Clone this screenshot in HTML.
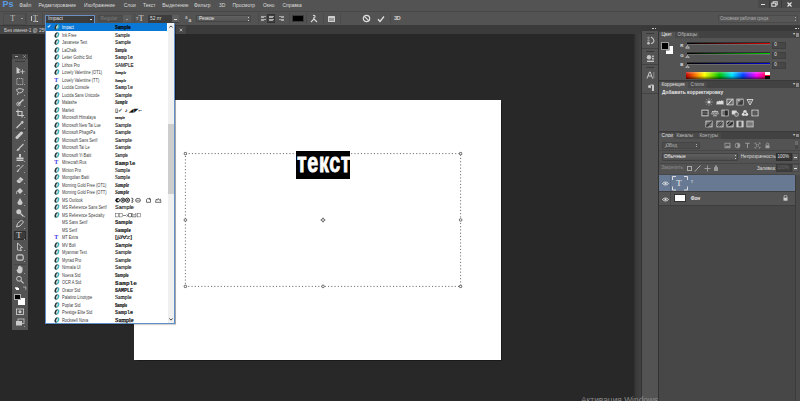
<!DOCTYPE html>
<html><head><meta charset="utf-8">
<style>
*{margin:0;padding:0;box-sizing:border-box}
html,body{width:800px;height:401px;overflow:hidden;background:#282828;font-family:"Liberation Sans",sans-serif;position:relative}
.a{position:absolute}
.t{position:absolute;white-space:nowrap;line-height:1}
#dd{position:absolute;left:44.8px;top:23.2px;width:130.6px;height:301.1px;background:#fff;border:1px solid #5f8fc8;border-top:none;box-shadow:0.5px 1px 1px rgba(0,0,0,0.35)}
.row{position:absolute;left:0;width:121.2px;height:7.5px}
.row.sel{background:#0a78d6;top:0 !important;height:7.8px}
.row.sel .fn,.row.sel .smp,.row.sel .oi,.row.sel .chk{margin-top:0.3px}
.row .fn{position:absolute;left:16.3px;top:0.7px;font-size:4.6px;line-height:7.5px;color:#3a3a3a;white-space:nowrap;transform:scaleX(0.86);transform-origin:0 50%}
.row.sel .fn{color:#fff}
.row .smp{position:absolute;left:69.5px;top:0.6px;line-height:7.5px;color:#111;-webkit-text-stroke:0.12px #111;white-space:nowrap;transform-origin:0 50%}
.oi{position:absolute;left:8.6px;top:1px;width:6px;height:6px}
.ti{position:absolute;left:8.5px;top:1px;font-style:normal;font-weight:bold;font-size:6px;line-height:6px;color:#3535e8;font-family:"Liberation Serif",serif}
.chk{position:absolute;left:1px;top:1px;font-size:5px;line-height:5px;color:#fff;font-weight:normal}
#sb{position:absolute;left:122.2px;top:0;width:5.6px;height:299.8px;background:#f0f0f0}
#thumb{position:absolute;left:0;top:100.5px;width:5.6px;height:70px;background:#cdcdcd}
</style></head><body>
<svg width="0" height="0" style="position:absolute"><defs><symbol id="oic" viewBox="0 0 6 6"><g transform="translate(0.6 0) skewX(-12)"><ellipse cx="3" cy="3" rx="2.3" ry="2.7" fill="#3bb0ba"/><path d="M3 0.3A2.3 2.7 0 0 0 3 5.7Z" fill="#2e2e2e"/><ellipse cx="3" cy="3" rx="0.65" ry="1.8" fill="#fff"/></g></symbol></defs></svg>
<div class="a" style="left:0px;top:0px;width:800px;height:11px;background:#535353;"></div>
<div class="a" style="left:0px;top:10.5px;width:800px;height:1px;background:#484848;"></div>
<span class="t" style="left:2.6px;top:0.2px;font-size:9px;color:#5c9de2;font-weight:bold;letter-spacing:-0.2px">Ps</span>
<span class="t" style="left:19.3px;top:4px;font-size:4.95px;color:#dcdcdc;">Файл</span>
<span class="t" style="left:38.5px;top:4px;font-size:4.95px;color:#dcdcdc;">Редактирование</span>
<span class="t" style="left:84px;top:4px;font-size:4.95px;color:#dcdcdc;">Изображение</span>
<span class="t" style="left:123.8px;top:4px;font-size:4.95px;color:#dcdcdc;">Слои</span>
<span class="t" style="left:143px;top:4px;font-size:4.95px;color:#dcdcdc;">Текст</span>
<span class="t" style="left:162.3px;top:4px;font-size:4.95px;color:#dcdcdc;">Выделение</span>
<span class="t" style="left:194px;top:4px;font-size:4.95px;color:#dcdcdc;">Фильтр</span>
<span class="t" style="left:219px;top:4px;font-size:4.95px;color:#dcdcdc;">3D</span>
<span class="t" style="left:232.5px;top:4px;font-size:4.95px;color:#dcdcdc;">Просмотр</span>
<span class="t" style="left:263px;top:4px;font-size:4.95px;color:#dcdcdc;">Окно</span>
<span class="t" style="left:282.5px;top:4px;font-size:4.95px;color:#dcdcdc;">Справка</span>
<div class="a" style="left:757.5px;top:0px;width:42.5px;height:7.5px;background:#4a4a4a;border-radius:0 0 0 1px"></div>
<div class="a" style="left:768.5px;top:0px;width:1px;height:7.5px;background:#3c3c3c;"></div>
<div class="a" style="left:780.5px;top:0px;width:1px;height:7.5px;background:#3c3c3c;"></div>
<div class="a" style="left:761px;top:4px;width:4px;height:1.2px;background:#e0e0e0;"></div>
<svg class="a" style="left:771px;top:1px" width="7" height="6" viewBox="0 0 7 6"><rect x="2.2" y="0.8" width="4" height="3" fill="none" stroke="#e0e0e0" stroke-width="1"/><rect x="0.8" y="2.2" width="4" height="3" fill="#4a4a4a" stroke="#e0e0e0" stroke-width="1"/></svg>
<svg class="a" style="left:787px;top:1.5px" width="5" height="5" viewBox="0 0 5 5"><path d="M0.5 0.5L4.5 4.5M4.5 0.5L0.5 4.5" stroke="#e8e8e8" stroke-width="1.1"/></svg>
<div class="a" style="left:0px;top:11.5px;width:800px;height:13.5px;background:#535353;"></div>
<div class="a" style="left:0px;top:24.6px;width:800px;height:1px;background:#3b3b3b;"></div>
<span class="t" style="left:10.3px;top:14.6px;font-size:8px;color:#bdbdbd;font-family:'Liberation Serif'">T</span>
<div class="a" style="left:21px;top:18.3px;width:1.6px;height:1.2px;background:#9a9a9a;"></div>
<div class="a" style="left:2.5px;top:12.5px;width:23px;height:12px;background:none;border:0.5px solid #4a4a4a"></div>
<div class="a" style="left:25.5px;top:13px;width:0.8px;height:11px;background:#4a4a4a;"></div>
<span class="t" style="left:33px;top:14.8px;font-size:7.5px;color:#c8c8c8;font-family:'Liberation Serif'">T</span>
<div class="a" style="left:31.2px;top:16px;width:1px;height:5px;background:#c8c8c8;"></div>
<div class="a" style="left:33px;top:21.3px;width:5px;height:0.8px;background:#aaa;"></div>
<div class="a" style="left:36.5px;top:20.5px;width:1.5px;height:1.5px;background:#ddd;"></div>
<div class="a" style="left:42px;top:13px;width:0.8px;height:11px;background:#4a4a4a;"></div>
<div class="a" style="left:45px;top:14.5px;width:49.5px;height:9px;background:#3d3d3d;border:1px solid #6b8fc2;border-bottom:none"></div>
<span class="t" style="left:48px;top:16.2px;font-size:5px;color:#e0e0e0;">Impact</span>
<div class="a" style="left:88px;top:15.5px;width:6px;height:7px;background:#3a3a3a;"></div>
<div class="a" style="left:89.5px;top:18.8px;width:2.5px;height:1.3px;background:#dddddd;"></div>
<div class="a" style="left:98.3px;top:14.9px;width:32.2px;height:7.5px;background:#4e4e4e;border:0.5px solid #4a4a4a"></div>
<span class="t" style="left:100.5px;top:16.5px;font-size:4.8px;color:#7a7a7a;">Regular</span>
<div class="a" style="left:122.5px;top:15.2px;width:8px;height:7px;background:#5c5c5c;"></div>
<div class="a" style="left:125.5px;top:18.8px;width:2px;height:1px;background:#9a9a9a;"></div>
<div class="a" style="left:133.5px;top:13px;width:0.8px;height:11px;background:#4a4a4a;"></div>
<span class="t" style="left:138.5px;top:14px;font-size:8.5px;color:#d0d0d0;font-family:'Liberation Serif'">T</span>
<span class="t" style="left:135.8px;top:16.8px;font-size:4.5px;color:#d0d0d0;font-family:'Liberation Serif'">T</span>
<div class="a" style="left:147.8px;top:14.7px;width:31.5px;height:8px;background:#3d3d3d;"></div>
<span class="t" style="left:150px;top:16.6px;font-size:4.8px;color:#e0e0e0;">52 пт</span>
<div class="a" style="left:171.5px;top:15.2px;width:7.5px;height:7px;background:#5e5e5e;"></div>
<div class="a" style="left:174px;top:18.8px;width:2.5px;height:1.2px;background:#dcdcdc;"></div>
<span class="t" style="left:185px;top:15.5px;font-size:4.5px;color:#cfcfcf;">a</span>
<span class="t" style="left:188.5px;top:17.5px;font-size:5px;color:#cfcfcf;font-weight:bold">a</span>
<div class="a" style="left:196px;top:14.8px;width:55px;height:7.4px;background:linear-gradient(#616161,#545454);border:0.5px solid #444;border-radius:1px"></div>
<span class="t" style="left:199px;top:16.6px;font-size:4.8px;color:#e6e6e6;">Резкое</span>
<div class="a" style="left:247.5px;top:16.5px;width:1.2px;height:1.2px;background:#ccc;"></div>
<div class="a" style="left:247.5px;top:19.5px;width:1.2px;height:1.2px;background:#ccc;"></div>
<div class="a" style="left:257.5px;top:13px;width:0.8px;height:11px;background:#4a4a4a;"></div>
<div class="a" style="left:266.5px;top:14px;width:8.5px;height:9px;background:#3f3f3f;border:0.5px solid #333"></div>
<div class="a" style="left:260.5px;top:15.8px;width:5px;height:0.75px;background:#a6a6a6;"></div>
<div class="a" style="left:260.5px;top:17.3px;width:3.5px;height:0.75px;background:#a6a6a6;"></div>
<div class="a" style="left:260.5px;top:18.8px;width:5px;height:0.75px;background:#a6a6a6;"></div>
<div class="a" style="left:260.5px;top:20.3px;width:3.5px;height:0.75px;background:#a6a6a6;"></div>
<div class="a" style="left:268.5px;top:15.8px;width:5px;height:0.75px;background:#a6a6a6;"></div>
<div class="a" style="left:269.25px;top:17.3px;width:3.5px;height:0.75px;background:#a6a6a6;"></div>
<div class="a" style="left:268.5px;top:18.8px;width:5px;height:0.75px;background:#a6a6a6;"></div>
<div class="a" style="left:269.25px;top:20.3px;width:3.5px;height:0.75px;background:#a6a6a6;"></div>
<div class="a" style="left:279.0px;top:15.8px;width:5px;height:0.75px;background:#a6a6a6;"></div>
<div class="a" style="left:280.5px;top:17.3px;width:3.5px;height:0.75px;background:#a6a6a6;"></div>
<div class="a" style="left:279.0px;top:18.8px;width:5px;height:0.75px;background:#a6a6a6;"></div>
<div class="a" style="left:280.5px;top:20.3px;width:3.5px;height:0.75px;background:#a6a6a6;"></div>
<div class="a" style="left:288.5px;top:13px;width:0.8px;height:11px;background:#4a4a4a;"></div>
<div class="a" style="left:292px;top:14.8px;width:11.5px;height:7.5px;background:#000;border:0.5px solid #3a3a3a"></div>
<div class="a" style="left:306px;top:13px;width:0.8px;height:11px;background:#4a4a4a;"></div>
<svg class="a" style="left:310px;top:14px" width="8" height="9" viewBox="0 0 8 9"><path d="M3 1.5 Q5.5 1 5 3 Q3 3.5 4 5 L1 8 M4 5 L7 8" stroke="#d8d8d8" stroke-width="1.1" fill="none"/></svg>
<div class="a" style="left:323px;top:13px;width:0.8px;height:11px;background:#4a4a4a;"></div>
<div class="a" style="left:327.5px;top:16px;width:7.5px;height:6px;background:#cfcfcf;border-radius:0.5px"></div>
<div class="a" style="left:328.5px;top:17.5px;width:5.5px;height:3.5px;background:#9a9a9a;"></div>
<div class="a" style="left:340px;top:13px;width:0.8px;height:11px;background:#4a4a4a;"></div>
<svg class="a" style="left:362px;top:14px" width="9" height="9" viewBox="0 0 9 9"><circle cx="4.5" cy="4.5" r="3.2" stroke="#dcdcdc" stroke-width="1.2" fill="none"/><path d="M2.3 2.3L6.7 6.7" stroke="#dcdcdc" stroke-width="1.2"/></svg>
<svg class="a" style="left:377px;top:14.5px" width="8" height="8" viewBox="0 0 8 8"><path d="M1 4.2L3 6.5L7 1.5" stroke="#e0e0e0" stroke-width="1.3" fill="none"/></svg>
<div class="a" style="left:389.5px;top:13px;width:0.8px;height:11px;background:#4a4a4a;"></div>
<span class="t" style="left:394px;top:15.5px;font-size:5.8px;color:#cfcfcf;font-weight:bold;letter-spacing:-0.8px">3D</span>
<div class="a" style="left:717.5px;top:15.2px;width:80px;height:8px;background:#575757;border:0.5px solid #4a4a4a;border-radius:1px"></div>
<span class="t" style="left:720.3px;top:17px;font-size:4.8px;color:#acacac;transform:scaleX(0.86);transform-origin:0 0">Основная рабочая среда</span>
<div class="a" style="left:795px;top:17px;width:1px;height:1px;background:#aaa;"></div>
<div class="a" style="left:795px;top:20px;width:1px;height:1px;background:#aaa;"></div>
<div class="a" style="left:0px;top:25.5px;width:800px;height:8.5px;background:#3b3b3b;"></div>
<div class="a" style="left:0px;top:25.5px;width:186px;height:8.5px;background:#474747;"></div>
<span class="t" style="left:4px;top:29px;font-size:4.8px;color:#cfcfcf;">Без имени-1 @ 25% (текст, RGB/8) *</span>
<svg class="a" style="left:178.5px;top:28px" width="4" height="4" viewBox="0 0 4 4"><path d="M0.7 0.7L3.3 3.3M3.3 0.7L0.7 3.3" stroke="#c8c8c8" stroke-width="0.8"/></svg>
<div class="a" style="left:633.5px;top:34px;width:7.5px;height:367px;background:linear-gradient(90deg,#2e2e2e,#3a3a3a 30%,#424242);"></div>
<div class="a" style="left:134px;top:100.3px;width:367px;height:259.6px;background:#ffffff;box-shadow:0.8px 0.8px 0.8px #1a1a1a"></div>
<svg class="a" style="left:180px;top:149px" width="286" height="143" viewBox="0 0 286 143"><rect x="5.4" y="4.6" width="275.20000000000005" height="132.8" fill="none" stroke="#6a6a6a" stroke-width="1" stroke-dasharray="1.1 2.15"/><rect x="4.2" y="3.3999999999999995" width="2.4" height="2.4" rx="0.8" fill="#fff" stroke="#444" stroke-width="0.8"/><rect x="4.2" y="69.8" width="2.4" height="2.4" rx="0.8" fill="#fff" stroke="#444" stroke-width="0.8"/><rect x="4.2" y="136.20000000000002" width="2.4" height="2.4" rx="0.8" fill="#fff" stroke="#444" stroke-width="0.8"/><rect x="141.8" y="3.3999999999999995" width="2.4" height="2.4" rx="0.8" fill="#fff" stroke="#444" stroke-width="0.8"/><rect x="141.8" y="136.20000000000002" width="2.4" height="2.4" rx="0.8" fill="#fff" stroke="#444" stroke-width="0.8"/><rect x="279.40000000000003" y="3.3999999999999995" width="2.4" height="2.4" rx="0.8" fill="#fff" stroke="#444" stroke-width="0.8"/><rect x="279.40000000000003" y="69.8" width="2.4" height="2.4" rx="0.8" fill="#fff" stroke="#444" stroke-width="0.8"/><rect x="279.40000000000003" y="136.20000000000002" width="2.4" height="2.4" rx="0.8" fill="#fff" stroke="#444" stroke-width="0.8"/><path d="M143.0 68.8L143.7 70.3L145.2 71.0L143.7 71.7L143.0 73.2L142.3 71.7L140.8 71.0L142.3 70.3Z" fill="none" stroke="#444" stroke-width="0.8"/></svg>
<div class="a" style="left:296px;top:151.2px;width:54px;height:27.7px;background:#000;"></div>
<span class="t" style="left:297.2px;top:148.3px;font-size:28.5px;color:#fff;font-weight:bold;transform:scaleX(0.69);transform-origin:0 0;letter-spacing:1px;-webkit-text-stroke:0.9px #fff">текст</span>
<div class="a" style="left:11.5px;top:53.5px;width:16.5px;height:276px;background:#535353;border-radius:1px 1px 0 0"></div>
<div class="a" style="left:11.5px;top:53.5px;width:16.5px;height:5px;background:#434343;"></div>
<div class="a" style="left:15px;top:55.6px;width:3px;height:0.9px;background:#aaa;"></div>
<svg class="a" style="left:22.5px;top:54.8px" width="3" height="3" viewBox="0 0 3 3"><path d="M0.3 0.3L2.7 2.7M2.7 0.3L0.3 2.7" stroke="#aaa" stroke-width="0.7"/></svg>
<div class="a" style="left:15px;top:60.5px;width:9.5px;height:0.8px;background:#3b3b3b;"></div>
<div class="a" style="left:13.5px;top:130px;width:12.5px;height:0.7px;background:#464646;"></div>
<div class="a" style="left:13.5px;top:218.5px;width:12.5px;height:0.7px;background:#464646;"></div>
<div class="a" style="left:13.5px;top:263.5px;width:12.5px;height:0.7px;background:#464646;"></div>
<div class="a" style="left:13.5px;top:230.5px;width:12.5px;height:9.5px;background:#3b3b3b;border:0.5px solid #2e2e2e"></div>
<svg class="a" style="left:14.5px;top:65.7px" width="10" height="9" viewBox="0 0 10 9"><path d="M1.5 1L6 4.2L3.8 4.6L5 7L1.5 7.5Z" fill="#cacaca"/><path d="M7.5 3.5V8M5.3 5.7H9.7" stroke="#cacaca" stroke-width="0.8"/></svg>
<svg class="a" style="left:14.5px;top:76.5px" width="10" height="9" viewBox="0 0 10 9"><rect x="1.8" y="1.5" width="6" height="6" fill="none" stroke="#cacaca" stroke-width="0.8" stroke-dasharray="1.2 0.8"/></svg>
<div class="a" style="left:24.3px;top:84.3px;width:1px;height:1px;background:#9a9a9a;"></div>
<svg class="a" style="left:14.5px;top:87.0px" width="10" height="9" viewBox="0 0 10 9"><path d="M1.5 2.5Q5 0.5 8.5 2.5Q8 6 4.5 6Q2 5.5 1.5 2.5Z M3 6L2.5 8" fill="none" stroke="#cacaca" stroke-width="0.9"/></svg>
<div class="a" style="left:24.3px;top:95px;width:1px;height:1px;background:#9a9a9a;"></div>
<svg class="a" style="left:14.5px;top:98.3px" width="10" height="9" viewBox="0 0 10 9"><circle cx="3.5" cy="6" r="1.8" fill="none" stroke="#cacaca" stroke-width="0.8"/><path d="M3 6.5L8.5 1.5" stroke="#cacaca" stroke-width="1.4"/></svg>
<div class="a" style="left:24.3px;top:106px;width:1px;height:1px;background:#9a9a9a;"></div>
<svg class="a" style="left:14.5px;top:109.0px" width="10" height="9" viewBox="0 0 10 9"><path d="M3 0.5V6.5H9M1 2.5H7V8.5" fill="none" stroke="#cacaca" stroke-width="1.1"/></svg>
<div class="a" style="left:24.3px;top:117px;width:1px;height:1px;background:#9a9a9a;"></div>
<svg class="a" style="left:14.5px;top:120.0px" width="10" height="9" viewBox="0 0 10 9"><path d="M1.5 8L6.5 3" stroke="#cacaca" stroke-width="1.2"/><path d="M5.5 2L7.5 0.8L8.8 2L7.5 4Z" fill="#cacaca"/></svg>
<div class="a" style="left:24.3px;top:128px;width:1px;height:1px;background:#9a9a9a;"></div>
<svg class="a" style="left:14.5px;top:131.3px" width="10" height="9" viewBox="0 0 10 9"><path d="M2 6.5L6.5 2" stroke="#cacaca" stroke-width="3" stroke-linecap="round"/></svg>
<div class="a" style="left:24.3px;top:139.5px;width:1px;height:1px;background:#9a9a9a;"></div>
<svg class="a" style="left:14.5px;top:142.5px" width="10" height="9" viewBox="0 0 10 9"><path d="M8.5 1L4 5.5" stroke="#cacaca" stroke-width="1.1"/><path d="M4.2 5.2Q2 5 1.5 8Q4.5 8 4.8 6Z" fill="#cacaca"/></svg>
<div class="a" style="left:24.3px;top:150.5px;width:1px;height:1px;background:#9a9a9a;"></div>
<svg class="a" style="left:14.5px;top:153.0px" width="10" height="9" viewBox="0 0 10 9"><rect x="4" y="1" width="2" height="3.5" fill="#cacaca"/><rect x="1.5" y="4.5" width="7" height="2" fill="#cacaca"/><rect x="1.5" y="7" width="7" height="1" fill="#cacaca"/></svg>
<div class="a" style="left:24.3px;top:161px;width:1px;height:1px;background:#9a9a9a;"></div>
<svg class="a" style="left:14.5px;top:164.0px" width="10" height="9" viewBox="0 0 10 9"><path d="M8.5 1L3.5 6M1.5 2.5Q3 0.5 5 2" stroke="#cacaca" stroke-width="1" fill="none"/><path d="M3.8 5.8Q2 6 1.5 8Q3.5 8 4.2 6.5Z" fill="#cacaca"/></svg>
<div class="a" style="left:24.3px;top:172px;width:1px;height:1px;background:#9a9a9a;"></div>
<svg class="a" style="left:14.5px;top:175.0px" width="10" height="9" viewBox="0 0 10 9"><path d="M1.5 6L5.5 2L8.5 4.5L5 8H3Z" fill="#cacaca"/><path d="M3.5 4L6 6.5" stroke="#666" stroke-width="0.6"/></svg>
<div class="a" style="left:24.3px;top:183px;width:1px;height:1px;background:#9a9a9a;"></div>
<svg class="a" style="left:14.5px;top:186.0px" width="10" height="9" viewBox="0 0 10 9"><path d="M2 5L5 2L8 5L5 8Z" fill="#cacaca"/><path d="M2 5Q1 7 1.8 8" stroke="#cacaca" stroke-width="0.8" fill="none"/></svg>
<div class="a" style="left:24.3px;top:194px;width:1px;height:1px;background:#9a9a9a;"></div>
<svg class="a" style="left:14.5px;top:196.5px" width="10" height="9" viewBox="0 0 10 9"><path d="M5 1L7.5 5.5A2.5 2.5 0 0 1 2.5 5.5Z" fill="#cacaca"/></svg>
<div class="a" style="left:24.3px;top:204.5px;width:1px;height:1px;background:#9a9a9a;"></div>
<svg class="a" style="left:14.5px;top:208.0px" width="10" height="9" viewBox="0 0 10 9"><circle cx="3.8" cy="3.8" r="2.5" fill="#cacaca"/><path d="M5.5 5.5L8.5 8.5" stroke="#cacaca" stroke-width="1.3"/></svg>
<div class="a" style="left:24.3px;top:216px;width:1px;height:1px;background:#9a9a9a;"></div>
<svg class="a" style="left:14.5px;top:219.25px" width="10" height="9" viewBox="0 0 10 9"><path d="M1.5 8L2.5 4.5L6.5 1L8.5 3L5 7Z" fill="none" stroke="#cacaca" stroke-width="1"/></svg>
<div class="a" style="left:24.3px;top:227.5px;width:1px;height:1px;background:#9a9a9a;"></div>
<span class="t" style="left:16.2px;top:231.3px;font-size:8.5px;color:#d8d8d8;font-family:'Liberation Serif'">T</span>
<div class="a" style="left:24.3px;top:238.5px;width:1px;height:1px;background:#9a9a9a;"></div>
<svg class="a" style="left:14.5px;top:241.5px" width="10" height="9" viewBox="0 0 10 9"><path d="M2.5 1L7.5 5.5L5 5.8L6.5 8.5L2.5 8Z" fill="none" stroke="#cacaca" stroke-width="0.9"/></svg>
<div class="a" style="left:24.3px;top:249.5px;width:1px;height:1px;background:#9a9a9a;"></div>
<svg class="a" style="left:14.5px;top:252.5px" width="10" height="9" viewBox="0 0 10 9"><rect x="1.8" y="1.8" width="6.4" height="5.4" rx="1.6" fill="none" stroke="#cacaca" stroke-width="1.2"/></svg>
<div class="a" style="left:24.3px;top:260.5px;width:1px;height:1px;background:#9a9a9a;"></div>
<svg class="a" style="left:14.5px;top:265.0px" width="10" height="9" viewBox="0 0 10 9"><path d="M1.5 5L3 4V1.5H4V4V0.8H5.2V4V1.2H6.3V4.5V2.2H7.5V6Q7 8.5 4.5 8.5Q2.5 8.5 1.5 5Z" fill="#cacaca"/></svg>
<div class="a" style="left:24.3px;top:273px;width:1px;height:1px;background:#9a9a9a;"></div>
<svg class="a" style="left:14.5px;top:275.0px" width="10" height="9" viewBox="0 0 10 9"><circle cx="4" cy="3.8" r="2.4" fill="none" stroke="#cacaca" stroke-width="1"/><path d="M5.8 5.6L8.6 8.4" stroke="#cacaca" stroke-width="1.2"/></svg>
<div class="a" style="left:15px;top:286.5px;width:2.5px;height:2.5px;background:#000;border:0.5px solid #ccc"></div>
<div class="a" style="left:16.2px;top:287.8px;width:2.5px;height:2.5px;background:#fff;"></div>
<svg class="a" style="left:21.5px;top:286px" width="5" height="5" viewBox="0 0 5 5"><path d="M1 1H3.8V3.8" fill="none" stroke="#ccc" stroke-width="0.7"/></svg>
<div class="a" style="left:17.6px;top:297.6px;width:7.9px;height:7.4px;background:#fff;"></div>
<div class="a" style="left:14.1px;top:293.6px;width:6.9px;height:6.9px;background:#000;border:0.6px solid #aaa"></div>
<svg class="a" style="left:14.5px;top:307.0px" width="10" height="9" viewBox="0 0 10 9"><rect x="1.5" y="2" width="7" height="5.5" fill="none" stroke="#cacaca" stroke-width="0.9"/><circle cx="5" cy="4.75" r="1.6" fill="#cacaca"/></svg>
<svg class="a" style="left:14.5px;top:317.9px" width="10" height="9" viewBox="0 0 10 9"><rect x="3" y="1" width="6" height="4.5" fill="none" stroke="#cacaca" stroke-width="0.8"/><rect x="1" y="3" width="6" height="4.5" fill="#cacaca"/></svg>
<div class="a" style="left:24.3px;top:326px;width:1px;height:1px;background:#9a9a9a;"></div>
<div class="a" style="left:641px;top:25.5px;width:159px;height:375.5px;background:#313131;"></div>
<div class="a" style="left:641px;top:25.5px;width:159px;height:5.5px;background:#393939;"></div>
<div class="a" style="left:652.3px;top:27.6px;width:1.5px;height:1.5px;background:#c8c8c8;"></div>
<div class="a" style="left:654.5px;top:27.6px;width:1.5px;height:1.5px;background:#c8c8c8;"></div>
<div class="a" style="left:795.3px;top:27.6px;width:1.5px;height:1.5px;background:#c8c8c8;"></div>
<div class="a" style="left:797.5px;top:27.6px;width:1.5px;height:1.5px;background:#c8c8c8;"></div>
<div class="a" style="left:642px;top:31px;width:15.5px;height:370px;background:#535353;"></div>
<div class="a" style="left:642px;top:31px;width:15.5px;height:17.5px;background:#535353;"></div>
<div class="a" style="left:642px;top:48.0px;width:15.5px;height:0.8px;background:#434343;"></div>
<div class="a" style="left:645.5px;top:33px;width:8.5px;height:0.9px;background:#383838;"></div>
<div class="a" style="left:642px;top:49px;width:15.5px;height:15.5px;background:#535353;"></div>
<div class="a" style="left:642px;top:64.0px;width:15.5px;height:0.8px;background:#434343;"></div>
<div class="a" style="left:645.5px;top:51px;width:8.5px;height:0.9px;background:#383838;"></div>
<div class="a" style="left:642px;top:65px;width:15.5px;height:28.5px;background:#535353;"></div>
<div class="a" style="left:642px;top:93.0px;width:15.5px;height:0.8px;background:#434343;"></div>
<div class="a" style="left:645.5px;top:67px;width:8.5px;height:0.9px;background:#383838;"></div>
<svg class="a" style="left:646px;top:36px" width="9" height="9" viewBox="0 0 9 9"><circle cx="2.5" cy="1.8" r="1.2" fill="#8a8a8a"/><circle cx="2.5" cy="4.5" r="1.2" fill="#8a8a8a"/><circle cx="2.5" cy="7.3" r="1.3" fill="#c6c6c6"/><path d="M5 1Q8.5 3 7.8 5.5Q7 7.5 5 7.5" stroke="#c6c6c6" stroke-width="1.1" fill="none"/></svg>
<svg class="a" style="left:646px;top:53.5px" width="9" height="9" viewBox="0 0 9 9"><circle cx="3" cy="3.2" r="2.2" fill="#c6c6c6"/><rect x="6" y="1.6" width="1.8" height="1.6" fill="#c6c6c6"/><rect x="6" y="4" width="1.8" height="1.6" fill="#c6c6c6"/><rect x="1" y="6.6" width="7" height="1.4" fill="#c6c6c6"/></svg>
<svg class="a" style="left:646px;top:71px" width="9" height="8" viewBox="0 0 9 8"><path d="M1 7.5L3.5 1H4.3L6.5 7.5M2 5H5.5" stroke="#c6c6c6" stroke-width="1" fill="none"/><path d="M7.8 1V7.5" stroke="#9a9a9a" stroke-width="0.8"/></svg>
<svg class="a" style="left:646px;top:83.5px" width="9" height="8" viewBox="0 0 9 8"><path d="M4.5 1H7.5V7M6.5 1V7" stroke="#c6c6c6" stroke-width="1" fill="none"/><path d="M4.5 1A2 2 0 0 0 4.5 4.5Z" fill="#c6c6c6"/><rect x="2" y="1" width="3" height="3" rx="1.5" fill="#c6c6c6"/></svg>
<div class="a" style="left:659px;top:31px;width:141px;height:370px;background:#535353;"></div>
<div class="a" style="left:659px;top:31px;width:141px;height:6.5px;background:#424242;"></div>
<div class="a" style="left:659px;top:32px;width:15.5px;height:6.5px;background:#535353;"></div>
<span class="t" style="left:661.5px;top:33.3px;font-size:4.7px;color:#e4e4e4;">Цвет</span>
<div class="a" style="left:675px;top:32px;width:23.799999999999955px;height:5.5px;background:#494949;"></div>
<span class="t" style="left:677.5px;top:33.3px;font-size:4.7px;color:#bdbdbd;">Образцы</span>
<span class="t" style="left:793.2px;top:32.3px;font-size:4px;color:#cfcfcf;">▾</span>
<div class="a" style="left:796px;top:33px;width:3px;height:3.5px;background:#8a8a8a;"></div>
<div class="a" style="left:665.6px;top:46.4px;width:7.4px;height:7.7px;background:#fff;"></div>
<div class="a" style="left:661.2px;top:42.2px;width:7.8px;height:7.4px;background:#000;border:0.6px solid #999;box-shadow:0 0 0 0.5px #555"></div>
<span class="t" style="left:680.3px;top:43.6px;font-size:4.3px;color:#e0e0e0;font-weight:bold">R</span>
<div class="a" style="left:687px;top:42.199999999999996px;width:83px;height:2.6px;background:linear-gradient(90deg,#000 2%,#e00000);border-top:0.6px solid #303030;border-bottom:0.5px solid #6a6a6a"></div>
<svg class="a" style="left:685px;top:45.0px" width="5" height="3.5" viewBox="0 0 5 3.5"><path d="M2.5 0.5L4.5 3.2H0.5Z" fill="#777" stroke="#e0e0e0" stroke-width="0.6"/></svg>
<div class="a" style="left:772px;top:41.7px;width:14px;height:7.2px;background:#474747;border:0.5px solid #3f3f3f"></div>
<span class="t" style="left:774.2px;top:43.4px;font-size:4.6px;color:#e0e0e0;">0</span>
<span class="t" style="left:680.3px;top:53.5px;font-size:4.3px;color:#e0e0e0;font-weight:bold">G</span>
<div class="a" style="left:687px;top:52.099999999999994px;width:83px;height:2.6px;background:linear-gradient(90deg,#000 2%,#00d000);border-top:0.6px solid #303030;border-bottom:0.5px solid #6a6a6a"></div>
<svg class="a" style="left:685px;top:54.9px" width="5" height="3.5" viewBox="0 0 5 3.5"><path d="M2.5 0.5L4.5 3.2H0.5Z" fill="#777" stroke="#e0e0e0" stroke-width="0.6"/></svg>
<div class="a" style="left:772px;top:51.650000000000006px;width:14px;height:7.2px;background:#474747;border:0.5px solid #3f3f3f"></div>
<span class="t" style="left:774.2px;top:53.349999999999994px;font-size:4.6px;color:#e0e0e0;">0</span>
<span class="t" style="left:680.3px;top:63.400000000000006px;font-size:4.3px;color:#e0e0e0;font-weight:bold">B</span>
<div class="a" style="left:687px;top:62.0px;width:83px;height:2.6px;background:linear-gradient(90deg,#000 2%,#0000e0);border-top:0.6px solid #303030;border-bottom:0.5px solid #6a6a6a"></div>
<svg class="a" style="left:685px;top:64.8px" width="5" height="3.5" viewBox="0 0 5 3.5"><path d="M2.5 0.5L4.5 3.2H0.5Z" fill="#777" stroke="#e0e0e0" stroke-width="0.6"/></svg>
<div class="a" style="left:772px;top:61.6px;width:14px;height:7.2px;background:#474747;border:0.5px solid #3f3f3f"></div>
<span class="t" style="left:774.2px;top:63.3px;font-size:4.6px;color:#e0e0e0;">0</span>
<div class="a" style="left:686px;top:72.2px;width:83.5px;height:6.6px;background:linear-gradient(90deg,#c00000 0%,#ff8000 12%,#ffff00 22%,#00c000 40%,#00e0ff 55%,#0040ff 68%,#ff00ff 84%,#ff0000 100%);"></div>
<div class="a" style="left:686px;top:72.2px;width:83.5px;height:6.6px;background:linear-gradient(rgba(255,255,255,0.3),rgba(255,255,255,0) 40%,rgba(0,0,0,0) 55%,rgba(0,0,0,0.6));"></div>
<div class="a" style="left:765px;top:72.2px;width:4.5px;height:3.3px;background:#fff;"></div>
<div class="a" style="left:765px;top:75.5px;width:4.5px;height:3.3px;background:#000;"></div>
<div class="a" style="left:659px;top:80px;width:141px;height:1px;background:#3a3a3a;"></div>
<div class="a" style="left:659px;top:81px;width:141px;height:6.700000000000003px;background:#424242;"></div>
<div class="a" style="left:659px;top:82px;width:28.5px;height:6.700000000000003px;background:#535353;"></div>
<span class="t" style="left:661.5px;top:83.3px;font-size:4.7px;color:#e4e4e4;">Коррекция</span>
<div class="a" style="left:688px;top:82px;width:18.5px;height:5.700000000000003px;background:#494949;"></div>
<span class="t" style="left:690.5px;top:83.3px;font-size:4.7px;color:#bdbdbd;">Стили</span>
<span class="t" style="left:793.2px;top:82.3px;font-size:4px;color:#cfcfcf;">▾</span>
<div class="a" style="left:796px;top:83px;width:3px;height:3.5px;background:#8a8a8a;"></div>
<span class="t" style="left:662px;top:91.2px;font-size:4.9px;color:#e6e6e6;font-weight:bold">Добавить корректировку</span>
<svg class="a" style="left:705px;top:98px" width="8" height="8" viewBox="0 0 8 8"><circle cx="4" cy="4" r="1.6" fill="#dadada"/><path d="M4 0.3V1.6M4 6.4V7.7M0.3 4H1.6M6.4 4H7.7M1.4 1.4L2.3 2.3M5.7 5.7L6.6 6.6M1.4 6.6L2.3 5.7M5.7 2.3L6.6 1.4" stroke="#dadada" stroke-width="0.6"/></svg>
<svg class="a" style="left:715.8px;top:98px" width="8" height="8" viewBox="0 0 8 8"><path d="M0.5 6.5V4L1.5 3L2.5 3.5L3.5 2.5L4.5 3.2L5.5 2.2L6.5 3L7.5 2.5V6.5Z" fill="#dadada"/><rect x="0.5" y="6" width="7" height="1" fill="#888"/></svg>
<svg class="a" style="left:726px;top:98px" width="8" height="8" viewBox="0 0 8 8"><rect x="0.9" y="1.1" width="6.2" height="5.8" fill="#6a6a6a" stroke="#dadada" stroke-width="0.8"/><path d="M1.2 6.5Q3 6 4 4Q5 2 6.8 1.5" stroke="#eee" stroke-width="0.9" fill="none"/></svg>
<svg class="a" style="left:736px;top:98px" width="8" height="8" viewBox="0 0 8 8"><rect x="0.9" y="1.1" width="6.2" height="5.8" fill="#6a6a6a" stroke="#dadada" stroke-width="0.8"/><path d="M1.2 6.7L6.8 1.3L6.8 6.7Z" fill="#3a3a3a"/><path d="M2 2.5H3.6M2.8 1.7V3.3" stroke="#fff" stroke-width="0.5"/></svg>
<svg class="a" style="left:746px;top:98px" width="8" height="8" viewBox="0 0 8 8"><path d="M1 1.5H7L4 7Z" fill="none" stroke="#dadada" stroke-width="0.9"/><path d="M2.5 2.5H5.5L4 5.5Z" fill="#9a9a9a"/></svg>
<svg class="a" style="left:700.5px;top:109.2px" width="8" height="8" viewBox="0 0 8 8"><rect x="0.9" y="1.1" width="6.2" height="5.8" fill="#6a6a6a" stroke="#dadada" stroke-width="0.8"/><path d="M1.5 2.5H6.5M1.5 4H6.5M1.5 5.5H6.5" stroke="#333" stroke-width="0.7"/></svg>
<svg class="a" style="left:710.5px;top:109.2px" width="8" height="8" viewBox="0 0 8 8"><path d="M4 1V6.5M1 2.5H7M2 6.8H6" stroke="#dadada" stroke-width="0.7"/><path d="M0.5 5L1.7 2.5L2.9 5Z M5.1 5L6.3 2.5L7.5 5Z" fill="none" stroke="#dadada" stroke-width="0.6"/></svg>
<svg class="a" style="left:720.5px;top:109.2px" width="8" height="8" viewBox="0 0 8 8"><rect x="0.9" y="1.1" width="6.2" height="5.8" fill="#6a6a6a" stroke="#dadada" stroke-width="0.8"/><rect x="4" y="1.5" width="2.8" height="5" fill="#2a2a2a"/></svg>
<svg class="a" style="left:730.5px;top:109.2px" width="8" height="8" viewBox="0 0 8 8"><rect x="0.8" y="1.5" width="5" height="4" rx="0.6" fill="#dadada"/><circle cx="5.5" cy="5.3" r="2" fill="#6a6a6a" stroke="#dadada" stroke-width="0.7"/></svg>
<svg class="a" style="left:740.5px;top:109.2px" width="8" height="8" viewBox="0 0 8 8"><circle cx="4" cy="2.7" r="1.8" fill="#dadada"/><circle cx="2.6" cy="5.2" r="1.8" fill="#dadada"/><circle cx="5.4" cy="5.2" r="1.8" fill="#dadada"/><circle cx="4" cy="4.3" r="0.9" fill="#555"/></svg>
<svg class="a" style="left:750.5px;top:109.2px" width="8" height="8" viewBox="0 0 8 8"><rect x="0.9" y="1.1" width="6.2" height="5.8" fill="#6a6a6a" stroke="#dadada" stroke-width="0.8"/><path d="M1.2 3H6.8M1.2 5H6.8M3 1.2V6.8M5 1.2V6.8" stroke="#444" stroke-width="0.5"/></svg>
<svg class="a" style="left:705px;top:120px" width="8" height="8" viewBox="0 0 8 8"><rect x="0.9" y="1.1" width="6.2" height="5.8" fill="#6a6a6a" stroke="#dadada" stroke-width="0.8"/><path d="M1.2 6.7L6.8 1.3" stroke="#333" stroke-width="1.1"/><rect x="1.5" y="4.5" width="2" height="2" fill="#333"/></svg>
<svg class="a" style="left:715.8px;top:120px" width="8" height="8" viewBox="0 0 8 8"><rect x="0.9" y="1.1" width="6.2" height="5.8" fill="#6a6a6a" stroke="#dadada" stroke-width="0.8"/><path d="M1.2 5.5L5.5 1.3M2.5 6.7L6.8 2.5" stroke="#333" stroke-width="0.9"/></svg>
<svg class="a" style="left:726px;top:120px" width="8" height="8" viewBox="0 0 8 8"><rect x="0.9" y="1.1" width="6.2" height="5.8" fill="#6a6a6a" stroke="#dadada" stroke-width="0.8"/><path d="M1.2 6.7L6.8 1.3L6.8 4Z" fill="#222"/><path d="M1.2 4L3.5 1.3" stroke="#222" stroke-width="1"/></svg>
<svg class="a" style="left:736px;top:120px" width="8" height="8" viewBox="0 0 8 8"><rect x="0.9" y="1.1" width="6.2" height="5.8" fill="url(#gm)" stroke="#dadada" stroke-width="0.8"/><defs><linearGradient id="gm"><stop offset="0" stop-color="#eee"/><stop offset="0.5" stop-color="#333"/><stop offset="1" stop-color="#eee"/></linearGradient></defs></svg>
<svg class="a" style="left:746px;top:120px" width="8" height="8" viewBox="0 0 8 8"><rect x="0.9" y="1.1" width="6.2" height="5.8" fill="#6a6a6a" stroke="#dadada" stroke-width="0.8"/><path d="M1.5 2.5H6.5M1.5 4H6.5M1.5 5.5H6.5" stroke="#9a9a9a" stroke-width="0.6"/></svg>
<div class="a" style="left:659px;top:130.5px;width:141px;height:1px;background:#3a3a3a;"></div>
<div class="a" style="left:659px;top:131.5px;width:141px;height:7.5px;background:#424242;"></div>
<div class="a" style="left:659px;top:132.5px;width:14.5px;height:7.5px;background:#535353;"></div>
<span class="t" style="left:661.5px;top:133.8px;font-size:4.7px;color:#e4e4e4;">Слои</span>
<div class="a" style="left:674px;top:132.5px;width:22.5px;height:6.5px;background:#494949;"></div>
<span class="t" style="left:676.5px;top:133.8px;font-size:4.7px;color:#bdbdbd;">Каналы</span>
<div class="a" style="left:697px;top:132.5px;width:23.5px;height:6.5px;background:#494949;"></div>
<span class="t" style="left:699.5px;top:133.8px;font-size:4.7px;color:#bdbdbd;">Контуры</span>
<span class="t" style="left:793.2px;top:132.8px;font-size:4px;color:#cfcfcf;">▾</span>
<div class="a" style="left:796px;top:133.5px;width:3px;height:3.5px;background:#8a8a8a;"></div>
<div class="a" style="left:661.6px;top:142px;width:38.4px;height:7px;background:#4d4d4d;border:0.5px solid #454545;border-radius:1px"></div>
<svg class="a" style="left:663.5px;top:143px" width="6" height="5" viewBox="0 0 6 5"><circle cx="3.7" cy="2" r="1.5" stroke="#bbb" stroke-width="0.6" fill="none"/><path d="M2.6 3L1 4.6" stroke="#bbb" stroke-width="0.8"/></svg>
<span class="t" style="left:669px;top:143.7px;font-size:4.5px;color:#a8a8a8;">Вид</span>
<div class="a" style="left:696px;top:143.5px;width:0.9px;height:0.9px;background:#aaa;"></div>
<div class="a" style="left:696px;top:146.3px;width:0.9px;height:0.9px;background:#aaa;"></div>
<svg class="a" style="left:724.0px;top:142px" width="7" height="7" viewBox="0 0 7 7"><rect x="1" y="1.2" width="5" height="4.6" fill="none" stroke="#a0a0a0" stroke-width="0.8"/><path d="M1.3 5.5L3 3.5L4.2 4.6L5.7 3V5.5Z" fill="#a0a0a0"/></svg>
<svg class="a" style="left:734.0px;top:142px" width="7" height="7" viewBox="0 0 7 7"><circle cx="3.5" cy="3.5" r="2.4" fill="none" stroke="#a0a0a0" stroke-width="0.8"/><path d="M3.5 1.1A2.4 2.4 0 0 1 3.5 5.9Z" fill="#a0a0a0"/></svg>
<svg class="a" style="left:744.0px;top:142px" width="7" height="7" viewBox="0 0 7 7"><path d="M1.2 1.3H5.8M3.5 1.3V6" stroke="#a0a0a0" stroke-width="0.9"/></svg>
<svg class="a" style="left:754.0px;top:142px" width="7" height="7" viewBox="0 0 7 7"><path d="M1 2.3V1H2.3M4.7 1H6V2.3M6 4.7V6H4.7M2.3 6H1V4.7" stroke="#a0a0a0" stroke-width="0.8" fill="none"/><rect x="2.3" y="2.3" width="2.4" height="2.4" fill="none" stroke="#a0a0a0" stroke-width="0.5"/></svg>
<svg class="a" style="left:764.0px;top:142px" width="7" height="7" viewBox="0 0 7 7"><rect x="1.5" y="3.2" width="4" height="3" fill="#a0a0a0"/><path d="M2.3 3.2V2.2A1.2 1.2 0 0 1 4.7 2.2V3.2" stroke="#a0a0a0" stroke-width="0.8" fill="none"/></svg>
<div class="a" style="left:795px;top:141px;width:3px;height:3.5px;background:#6a6a6a;"></div>
<div class="a" style="left:795px;top:145px;width:3px;height:4px;background:#474747;"></div>
<div class="a" style="left:659px;top:150px;width:141px;height:0.8px;background:#474747;"></div>
<div class="a" style="left:661.6px;top:153.2px;width:76.4px;height:7.8px;background:linear-gradient(#606060,#4f4f4f);border:0.5px solid #414141;border-radius:1px"></div>
<span class="t" style="left:664px;top:155.2px;font-size:4.9px;color:#f0f0f0;">Обычные</span>
<div class="a" style="left:735px;top:155.2px;width:1px;height:1px;background:#ccc;"></div>
<div class="a" style="left:735px;top:158px;width:1px;height:1px;background:#ccc;"></div>
<span class="t" style="left:740.8px;top:155px;font-size:4.6px;color:#dedede;">Непрозрачность:</span>
<div class="a" style="left:776px;top:153px;width:15.5px;height:8px;background:#353535;border:0.5px solid #2f2f2f"></div>
<span class="t" style="left:777.5px;top:155px;font-size:4.5px;color:#e0e0e0;">100%</span>
<div class="a" style="left:792px;top:153px;width:7px;height:8px;background:#5e5e5e;border:0.5px solid #474747"></div>
<div class="a" style="left:794px;top:156.5px;width:2.5px;height:1.2px;background:#ddd;"></div>
<div class="a" style="left:659px;top:162.8px;width:141px;height:0.8px;background:#474747;"></div>
<span class="t" style="left:661.3px;top:166.4px;font-size:4.5px;color:#8f8f8f;">Закрепить:</span>
<div class="a" style="left:687px;top:166.2px;width:4.5px;height:4.5px;background:none;border:0.7px solid #aaa"></div>
<svg class="a" style="left:693.5px;top:164.5px" width="7" height="7" viewBox="0 0 7 7"><path d="M6.5 0.5L2.5 4.5L1 6.5" stroke="#bbb" stroke-width="0.9" fill="none"/></svg>
<svg class="a" style="left:703.5px;top:164.5px" width="7" height="7" viewBox="0 0 7 7"><path d="M3.5 0.5V6.5M0.5 3.5H6.5" stroke="#aaa" stroke-width="0.8"/></svg>
<div class="a" style="left:713.6px;top:167.3px;width:4.6px;height:3.6px;background:#9a9a9a;border-radius:0.5px"></div>
<div class="a" style="left:714.6px;top:165px;width:2.6px;height:3px;background:none;border:0.7px solid #9a9a9a;border-radius:1.3px 1.3px 0 0"></div>
<span class="t" style="left:757px;top:166.5px;font-size:4.6px;color:#dedede;">Заливка:</span>
<div class="a" style="left:776px;top:164.2px;width:15.5px;height:8px;background:#3e3e3e;border:0.5px solid #393939"></div>
<span class="t" style="left:777.5px;top:166.2px;font-size:4.5px;color:#6d6d6d;">100%</span>
<div class="a" style="left:792px;top:164.2px;width:7px;height:8px;background:#5e5e5e;border:0.5px solid #474747"></div>
<div class="a" style="left:794px;top:167.7px;width:2.5px;height:1.2px;background:#ddd;"></div>
<div class="a" style="left:659px;top:174.2px;width:136px;height:0.8px;background:#474747;"></div>
<div class="a" style="left:659px;top:175px;width:136px;height:226px;background:#474747;"></div>
<div class="a" style="left:795px;top:175px;width:5px;height:226px;background:#4a4a4a;"></div>
<div class="a" style="left:794.5px;top:175px;width:0.8px;height:226px;background:#3b3b3b;"></div>
<div class="a" style="left:659px;top:175.1px;width:136px;height:16px;background:#687a93;"></div>
<svg class="a" style="left:661.5px;top:181px" width="7" height="5" viewBox="0 0 7 5"><path d="M0.4 2.5Q3.5 -0.6 6.6 2.5Q3.5 5.6 0.4 2.5Z" fill="none" stroke="#e6e6e6" stroke-width="0.8"/><circle cx="3.5" cy="2.5" r="1" fill="#e6e6e6"/></svg>
<div class="a" style="left:669.5px;top:175.1px;width:0.6px;height:16px;background:#5a6a80;"></div>
<svg class="a" style="left:672px;top:176px" width="16" height="14.5" viewBox="0 0 16 14.5"><path d="M0.5 4V0.5H4M12 0.5H15.5V4M15.5 10.5V14H12M4 14H0.5V10.5" stroke="#e8e8e8" stroke-width="0.9" fill="none"/></svg>
<span class="t" style="left:676.3px;top:178.6px;font-size:8.8px;color:#f0f0f0;font-family:'Liberation Serif'">T</span>
<span class="t" style="left:691px;top:180.2px;font-size:4.5px;color:#e8e8e8;">т</span>
<div class="a" style="left:659px;top:191.2px;width:136px;height:0.8px;background:#3d3d3d;"></div>
<div class="a" style="left:659px;top:192px;width:136px;height:13px;background:#535353;"></div>
<svg class="a" style="left:661.5px;top:196.5px" width="7" height="5" viewBox="0 0 7 5"><path d="M0.4 2.5Q3.5 -0.6 6.6 2.5Q3.5 5.6 0.4 2.5Z" fill="none" stroke="#e6e6e6" stroke-width="0.8"/><circle cx="3.5" cy="2.5" r="1" fill="#e6e6e6"/></svg>
<div class="a" style="left:669.5px;top:192px;width:0.6px;height:13px;background:#474747;"></div>
<div class="a" style="left:673.8px;top:193.5px;width:12.2px;height:8.7px;background:#fff;border:0.5px solid #333"></div>
<span class="t" style="left:690.8px;top:197.3px;font-size:4.7px;color:#e8e8e8;font-style:italic;font-weight:bold">Фон</span>
<svg class="a" style="left:783.3px;top:194.8px" width="5" height="6" viewBox="0 0 5 6"><path d="M1 2.8V1.8A1.5 1.5 0 0 1 4 1.8V2.8" stroke="#ccc" stroke-width="0.8" fill="none"/><rect x="0.5" y="2.7" width="4" height="3" fill="#ccc"/></svg>
<div class="a" style="left:659px;top:205px;width:136px;height:0.8px;background:#3d3d3d;"></div>
<span class="t" style="left:581px;top:395.9px;font-size:8.4px;color:#8a8a8a;">Активация Windows</span>
<div id="dd">
<div class="row sel" style="top:0.3px"><b class="chk">✔</b><svg class="oi" viewBox="0 0 6 6"><use href="#oic"/></svg><span class="fn">Impact</span><span class="smp" style="font-family:'Liberation Sans';font-size:5.6px;transform:scaleX(0.783);font-weight:bold;-webkit-text-stroke:0.25px #000">Sample</span></div>
<div class="row" style="top:7.8px"><svg class="oi" viewBox="0 0 6 6"><use href="#oic"/></svg><span class="fn">Ink Free</span><span class="smp" style="font-family:'Liberation Sans';font-size:5.3px;transform:scaleX(0.835)">Sample</span></div>
<div class="row" style="top:15.3px"><svg class="oi" viewBox="0 0 6 6"><use href="#oic"/></svg><span class="fn">Javanese Text</span><span class="smp" style="font-family:'Liberation Sans';font-size:5.3px;transform:scaleX(0.890)">Sample</span></div>
<div class="row" style="top:22.8px"><svg class="oi" viewBox="0 0 6 6"><use href="#oic"/></svg><span class="fn">LaChalk</span><span class="smp" style="font-family:'Liberation Sans';font-size:4.6px;transform:scaleX(0.733);font-weight:bold">Sample</span></div>
<div class="row" style="top:30.3px"><svg class="oi" viewBox="0 0 6 6"><use href="#oic"/></svg><span class="fn">Letter Gothic Std</span><span class="smp" style="font-family:'Liberation Mono';font-size:5.4px;transform:scaleX(0.926);margin-top:0.8px">Sample</span></div>
<div class="row" style="top:37.8px"><svg class="oi" viewBox="0 0 6 6"><use href="#oic"/></svg><span class="fn">Lithos Pro</span><span class="smp" style="font-family:'Liberation Sans';font-size:5.2px;transform:scaleX(0.877)">SAMPLE</span></div>
<div class="row" style="top:45.3px"><svg class="oi" viewBox="0 0 6 6"><use href="#oic"/></svg><span class="fn">Lovely Valentine (OT1)</span><span class="smp" style="font-family:'Liberation Serif';font-size:4.5px;transform:scaleX(0.800);font-weight:bold;font-style:italic">Sample</span></div>
<div class="row" style="top:52.8px"><i class="ti">T</i><span class="fn">Lovely Valentine (TT)</span><span class="smp" style="font-family:'Liberation Serif';font-size:4.5px;transform:scaleX(0.800);font-weight:bold;font-style:italic">Sample</span></div>
<div class="row" style="top:60.3px"><svg class="oi" viewBox="0 0 6 6"><use href="#oic"/></svg><span class="fn">Lucida Console</span><span class="smp" style="font-family:'Liberation Mono';font-size:5.3px;transform:scaleX(0.943);margin-top:0.8px">Sample</span></div>
<div class="row" style="top:67.8px"><svg class="oi" viewBox="0 0 6 6"><use href="#oic"/></svg><span class="fn">Lucida Sans Unicode</span><span class="smp" style="font-family:'Liberation Sans';font-size:5.4px;transform:scaleX(0.929)">Sample</span></div>
<div class="row" style="top:75.3px"><svg class="oi" viewBox="0 0 6 6"><use href="#oic"/></svg><span class="fn">Malashe</span><span class="smp" style="font-family:'Liberation Serif';font-size:5.2px;transform:scaleX(0.799);font-weight:bold;font-style:italic">Sample</span></div>
<div class="row" style="top:82.8px"><svg class="oi" viewBox="0 0 6 6"><use href="#oic"/></svg><span class="fn">Marlett</span><span class="smp" style="font-family:'Liberation Sans';font-size:5px;transform:scaleX(1.164)">▯✓ ♪ ◢◤⌐</span></div>
<div class="row" style="top:90.3px"><svg class="oi" viewBox="0 0 6 6"><use href="#oic"/></svg><span class="fn">Microsoft Himalaya</span><span class="smp" style="font-family:'Liberation Sans';font-size:4.2px;transform:scaleX(0.691);font-weight:bold">sample</span></div>
<div class="row" style="top:97.8px"><svg class="oi" viewBox="0 0 6 6"><use href="#oic"/></svg><span class="fn">Microsoft New Tai Lue</span><span class="smp" style="font-family:'Liberation Sans';font-size:5.4px;transform:scaleX(0.896)">Sample</span></div>
<div class="row" style="top:105.3px"><svg class="oi" viewBox="0 0 6 6"><use href="#oic"/></svg><span class="fn">Microsoft PhagsPa</span><span class="smp" style="font-family:'Liberation Sans';font-size:5.4px;transform:scaleX(0.874)">Sample</span></div>
<div class="row" style="top:112.8px"><svg class="oi" viewBox="0 0 6 6"><use href="#oic"/></svg><span class="fn">Microsoft Sans Serif</span><span class="smp" style="font-family:'Liberation Sans';font-size:5.5px;transform:scaleX(0.912)">Sample</span></div>
<div class="row" style="top:120.3px"><svg class="oi" viewBox="0 0 6 6"><use href="#oic"/></svg><span class="fn">Microsoft Tai Le</span><span class="smp" style="font-family:'Liberation Sans';font-size:5.4px;transform:scaleX(0.874)">Sample</span></div>
<div class="row" style="top:127.8px"><svg class="oi" viewBox="0 0 6 6"><use href="#oic"/></svg><span class="fn">Microsoft Yi Baiti</span><span class="smp" style="font-family:'Liberation Sans';font-size:4.6px;transform:scaleX(0.834)">Sample</span></div>
<div class="row" style="top:135.3px"><i class="ti">T</i><span class="fn">Minecraft Rus</span><span class="smp" style="font-family:'Liberation Mono';font-size:5.8px;transform:scaleX(0.982);font-weight:bold;margin-top:0.8px">Sample</span></div>
<div class="row" style="top:142.8px"><svg class="oi" viewBox="0 0 6 6"><use href="#oic"/></svg><span class="fn">Minion Pro</span><span class="smp" style="font-family:'Liberation Serif';font-size:5.4px;transform:scaleX(0.926)">Sample</span></div>
<div class="row" style="top:150.3px"><svg class="oi" viewBox="0 0 6 6"><use href="#oic"/></svg><span class="fn">Mongolian Baiti</span><span class="smp" style="font-family:'Liberation Serif';font-size:5.4px;transform:scaleX(0.926)">Sample</span></div>
<div class="row" style="top:157.8px"><svg class="oi" viewBox="0 0 6 6"><use href="#oic"/></svg><span class="fn">Morning Gold Free (OT1)</span><span class="smp" style="font-family:'Liberation Serif';font-size:5.6px;transform:scaleX(0.818);font-weight:bold;font-style:italic">Sample</span></div>
<div class="row" style="top:165.3px"><svg class="oi" viewBox="0 0 6 6"><use href="#oic"/></svg><span class="fn">Morning Gold Free (OTT)</span><span class="smp" style="font-family:'Liberation Serif';font-size:5.6px;transform:scaleX(0.818);font-weight:bold;font-style:italic">Sample</span></div>
<div class="row" style="top:172.8px"><svg class="oi" viewBox="0 0 6 6"><use href="#oic"/></svg><span class="fn">MS Outlook</span><span class="smp"><svg style="position:absolute;left:0;top:0.4px" width="50" height="6" viewBox="0 0 50 6"><circle cx="2.6" cy="3.2" r="2.2" fill="#111"/><circle cx="3.3" cy="3.2" r="1" fill="#fff"/><circle cx="7.8" cy="3.2" r="2.1" fill="none" stroke="#222" stroke-width="0.9"/><rect x="6.8" y="2.2" width="2" height="2" fill="#444"/><circle cx="12.5" cy="3.2" r="2.1" fill="none" stroke="#222" stroke-width="0.9"/><rect x="11.5" y="2.2" width="2" height="2" fill="#444"/><path d="M16.3 1.2Q18 0.8 18 2.2Q18 3 16.8 3.3Q18.3 3.6 18 4.8Q17.5 5.6 16.3 5.2" fill="none" stroke="#222" stroke-width="0.8"/><ellipse cx="23" cy="3.3" rx="2.6" ry="1.9" fill="none" stroke="#333" stroke-width="0.7"/><path d="M21 3.3H25" stroke="#444" stroke-width="0.6"/><path d="M31.5 5.3V2.5L33 1.3L34.5 2.5V1L35.5 1.8V5.3Z" fill="none" stroke="#333" stroke-width="0.7"/><path d="M40.5 5.3L41.2 2.2L42.3 3.2L43.3 1.5L44.3 3.2L45.4 2.2L46 5.3Z" fill="none" stroke="#333" stroke-width="0.7"/></svg></span></div>
<div class="row" style="top:180.3px"><svg class="oi" viewBox="0 0 6 6"><use href="#oic"/></svg><span class="fn">MS Reference Sans Serif</span><span class="smp" style="font-family:'Liberation Sans';font-size:5.8px;transform:scaleX(0.966)">Sample</span></div>
<div class="row" style="top:187.8px"><svg class="oi" viewBox="0 0 6 6"><use href="#oic"/></svg><span class="fn">MS Reference Specialty</span><span class="smp"><svg style="position:absolute;left:0;top:0.4px" width="27" height="6" viewBox="0 0 27 6"><rect x="0.4" y="1.3" width="3" height="3.6" fill="none" stroke="#555" stroke-width="0.5"/><rect x="4.2" y="1.3" width="3" height="3.6" fill="none" stroke="#555" stroke-width="0.5"/><path d="M8 3.5H11M11.5 2.5L13 3.5L11.5 4.5" fill="none" stroke="#333" stroke-width="0.6"/><path d="M13.5 1.5H16.5V4.8H13.5ZM17 1.5L19 3.3L21 1.5V4.8H17Z" fill="none" stroke="#333" stroke-width="0.6"/><rect x="22.6" y="1.3" width="3" height="3.6" fill="none" stroke="#555" stroke-width="0.5"/></svg></span></div>
<div class="row" style="top:195.3px"><span class="fn">MS Sans Serif</span><span class="smp" style="font-family:'Liberation Sans';font-size:5.2px;transform:scaleX(0.952);font-weight:bold">Sample</span></div>
<div class="row" style="top:202.8px"><span class="fn">MS Serif</span><span class="smp" style="font-family:'Liberation Serif';font-size:5.3px;transform:scaleX(0.929);font-weight:bold">Sample</span></div>
<div class="row" style="top:210.3px"><i class="ti">T</i><span class="fn">MT Extra</span><span class="smp" style="font-family:'Liberation Sans';font-size:4.8px;transform:scaleX(1.430)">[∫∂∀≠]</span></div>
<div class="row" style="top:217.8px"><svg class="oi" viewBox="0 0 6 6"><use href="#oic"/></svg><span class="fn">MV Boli</span><span class="smp" style="font-family:'Liberation Sans';font-size:5.5px;transform:scaleX(0.912);font-style:italic;-webkit-text-stroke:0.2px #111">Sample</span></div>
<div class="row" style="top:225.3px"><svg class="oi" viewBox="0 0 6 6"><use href="#oic"/></svg><span class="fn">Myanmar Text</span><span class="smp" style="font-family:'Liberation Sans';font-size:5.4px;transform:scaleX(0.901)">Sample</span></div>
<div class="row" style="top:232.8px"><svg class="oi" viewBox="0 0 6 6"><use href="#oic"/></svg><span class="fn">Myriad Pro</span><span class="smp" style="font-family:'Liberation Sans';font-size:5.4px;transform:scaleX(0.874)">Sample</span></div>
<div class="row" style="top:240.3px"><svg class="oi" viewBox="0 0 6 6"><use href="#oic"/></svg><span class="fn">Nirmala UI</span><span class="smp" style="font-family:'Liberation Sans';font-size:5.4px;transform:scaleX(0.901)">Sample</span></div>
<div class="row" style="top:247.8px"><svg class="oi" viewBox="0 0 6 6"><use href="#oic"/></svg><span class="fn">Nueva Std</span><span class="smp" style="font-family:'Liberation Sans';font-size:5.2px;transform:scaleX(0.746);font-weight:bold">Sample</span></div>
<div class="row" style="top:255.3px"><svg class="oi" viewBox="0 0 6 6"><use href="#oic"/></svg><span class="fn">OCR A Std</span><span class="smp" style="font-family:'Liberation Mono';font-size:5.8px;transform:scaleX(1.044);font-weight:bold;margin-top:0.8px">Sample</span></div>
<div class="row" style="top:262.8px"><svg class="oi" viewBox="0 0 6 6"><use href="#oic"/></svg><span class="fn">Orator Std</span><span class="smp" style="font-family:'Liberation Mono';font-size:4.6px;transform:scaleX(1.087);font-weight:bold;margin-top:0.8px">SAMPLE</span></div>
<div class="row" style="top:270.3px"><svg class="oi" viewBox="0 0 6 6"><use href="#oic"/></svg><span class="fn">Palatino Linotype</span><span class="smp" style="font-family:'Liberation Serif';font-size:5.6px;transform:scaleX(0.982)">Sample</span></div>
<div class="row" style="top:277.8px"><svg class="oi" viewBox="0 0 6 6"><use href="#oic"/></svg><span class="fn">Poplar Std</span><span class="smp" style="font-family:'Liberation Sans';font-size:5px;transform:scaleX(0.675);font-weight:bold;-webkit-text-stroke:0.2px #000">Sample</span></div>
<div class="row" style="top:285.3px"><svg class="oi" viewBox="0 0 6 6"><use href="#oic"/></svg><span class="fn">Prestige Elite Std</span><span class="smp" style="font-family:'Liberation Mono';font-size:5.4px;transform:scaleX(0.926);margin-top:0.8px;-webkit-text-stroke:0.2px #111">Sample</span></div>
<div class="row" style="top:292.8px"><svg class="oi" viewBox="0 0 6 6"><use href="#oic"/></svg><span class="fn">Rockwell Nova</span><span class="smp" style="font-family:'Liberation Serif';font-size:6px;transform:scaleX(1.033);-webkit-text-stroke:0.25px #111">Sample</span></div>
<div id="sb"><div id="thumb"></div>
<svg class="a" style="left:1.2px;top:1.9px" width="4" height="3" viewBox="0 0 4 3"><path d="M0.3 2.6L2 0.9L3.7 2.6" stroke="#444" stroke-width="1" fill="none"/></svg>
<svg class="a" style="left:1.2px;top:294.6px" width="4" height="3" viewBox="0 0 4 3"><path d="M0.3 0.4L2 2.1L3.7 0.4" stroke="#444" stroke-width="1" fill="none"/></svg>
</div>
</div>
</body></html>
